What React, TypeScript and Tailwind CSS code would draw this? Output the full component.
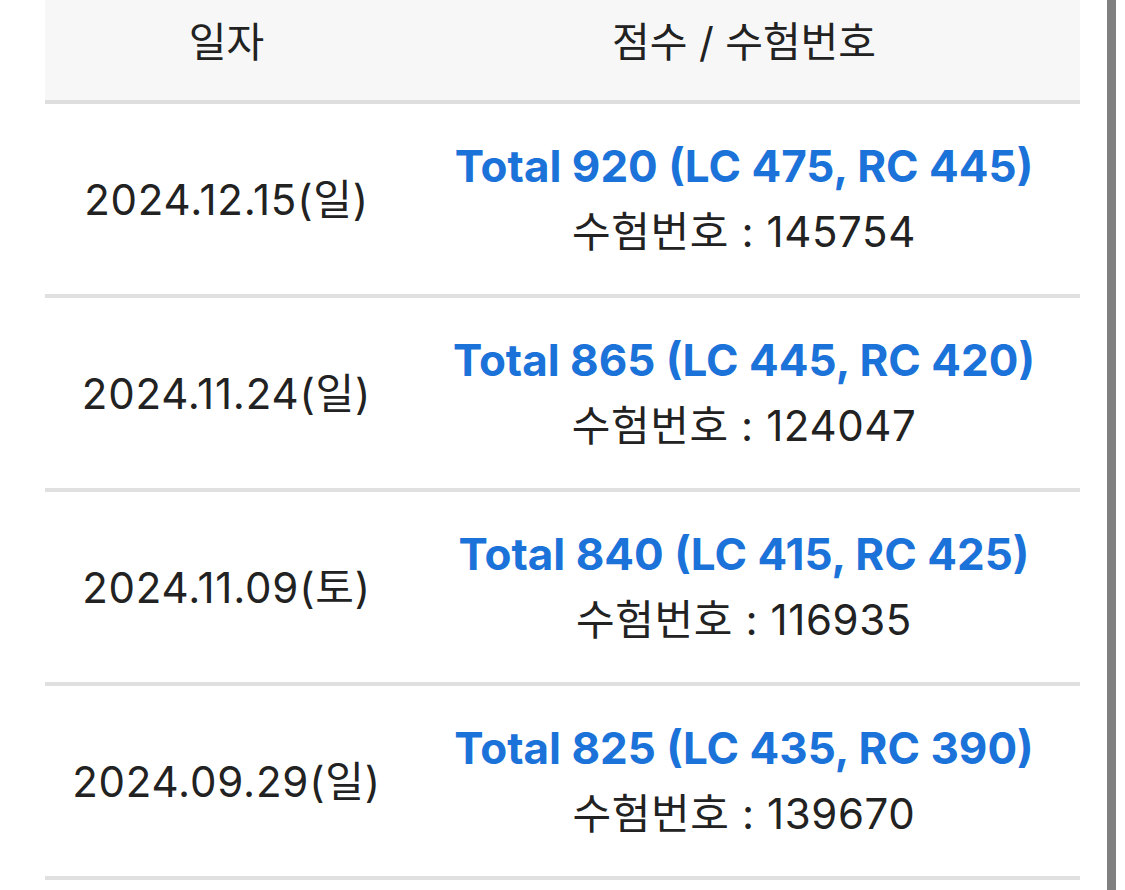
const rows = [
  { date: '2024.12.15(일)', total: 920, lc: 475, rc: 445, no: '145754' },
  { date: '2024.11.24(일)', total: 865, lc: 445, rc: 420, no: '124047' },
  { date: '2024.11.09(토)', total: 840, lc: 415, rc: 425, no: '116935' },
  { date: '2024.09.29(일)', total: 825, lc: 435, rc: 390, no: '139670' },
];

const kr = "font-['Inter','Noto_Sans_CJK_KR',sans-serif]";

function ScoreTable() {
  return (
    <div className="ml-[45px] w-[1035px] shrink-0">
      <div className="grid grid-cols-[363px_1fr] h-[104px] bg-[#f7f7f7] border-b-4 border-[#dedede] text-[#222] text-[41px] leading-none">
        <div className={`${kr} flex justify-center pt-[22px]`}>일자</div>
        <div className={`${kr} flex justify-center pt-[22px]`}>점수 / 수험번호</div>
      </div>
      {rows.map((r) => (
        <div
          key={r.no}
          className="grid grid-cols-[363px_1fr] h-[194px] border-b-4 border-[#e0e0e0] items-center"
        >
          <div className={`${kr} text-center text-[42px] tracking-[0.8px] text-[#222]`}>{r.date}</div>
          <div className="flex flex-col items-center">
            <span className="font-['Inter',sans-serif] font-bold text-[44px] text-[#1b72d8] leading-[66px]">
              Total {r.total} (LC {r.lc}, RC {r.rc})
            </span>
            <span className={`${kr} text-[42px] tracking-[0.6px] text-[#222] leading-[66px]`}>
              수험번호 : {r.no}
            </span>
          </div>
        </div>
      ))}
    </div>
  );
}

export default function App() {
  return (
    <div className="flex h-[890px] w-[1125px] overflow-hidden bg-white">
      <ScoreTable />
      <div className="ml-[27px] w-[9px] h-full bg-[#808080]" />
    </div>
  );
}
